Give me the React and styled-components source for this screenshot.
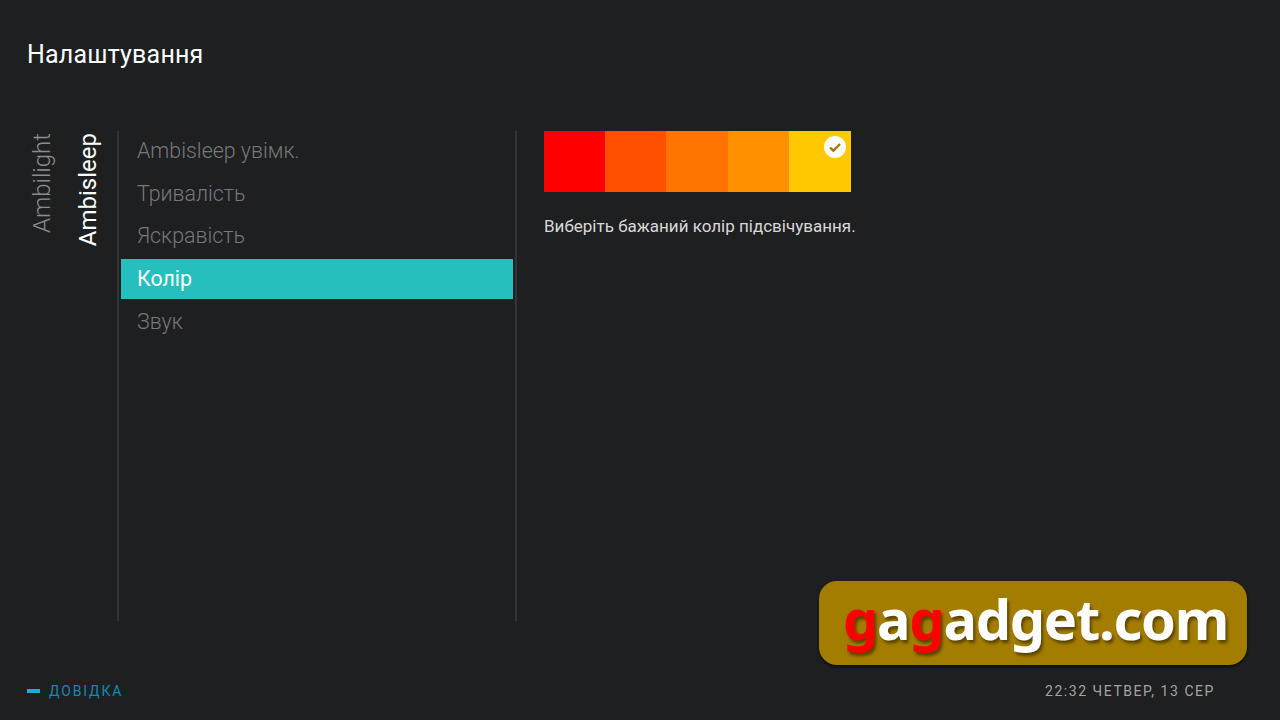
import styled, { createGlobalStyle } from 'styled-components';

const GlobalStyle = createGlobalStyle`
  html, body {
    margin: 0;
    padding: 0;
    background: #1e1f21;
  }
`;

const menuItems = ['Ambisleep увімк.', 'Тривалість', 'Яскравість', 'Колір', 'Звук'];
const swatches = ['#ff0000', '#ff5000', '#ff7300', '#ff9000', '#ffc800'];

export default function App() {
  const selected = 'Колір';

  return (
    <Page>
      <GlobalStyle />
      <Title>Налаштування</Title>
      <Main>
        <Tabs>
          <Tab>Ambilight</Tab>
          <Tab $active>Ambisleep</Tab>
        </Tabs>
        <Menu>
          {menuItems.map((item) => (
            <MenuItem key={item} $active={item === selected}>{item}</MenuItem>
          ))}
        </Menu>
        <Details>
          <Swatches>
            {swatches.map((color, i) => (
              <Swatch key={color} $color={color}>
                {i === swatches.length - 1 && (
                  <CheckBadge viewBox="0 0 22 22">
                    <circle cx="11" cy="11" r="11" fill="#fff" />
                    <path d="M6 11.5l3.4 3.2L16 8" fill="none" stroke="#a07a10" strokeWidth="2.4" />
                  </CheckBadge>
                )}
              </Swatch>
            ))}
          </Swatches>
          <Hint>Виберіть бажаний колір підсвічування.</Hint>
        </Details>
      </Main>
      <Footer>
        <Help><HelpKey />ДОВІДКА</Help>
        <Clock>22:32 ЧЕТВЕР, 13 СЕР</Clock>
      </Footer>
      <Watermark>
        <Red>g</Red>a<Red>g</Red>adget.com
      </Watermark>
    </Page>
  );
}

const Page = styled.div`
  position: relative;
  width: 1280px;
  height: 720px;
  overflow: hidden;
  display: flex;
  flex-direction: column;
  background: #1e1f21;
  font-family: Roboto, 'Liberation Sans', sans-serif;
`;

const Title = styled.h1`
  margin: 0;
  padding: 40px 0 0 27px;
  height: 131px;
  box-sizing: border-box;
  font-size: 25px;
  line-height: 29px;
  font-weight: 400;
  color: #fff;
  letter-spacing: 0.2px;
`;

const Main = styled.div`
  display: flex;
  height: 490px;
`;

const Tabs = styled.div`
  width: 117px;
  box-sizing: border-box;
  padding-left: 28px;
  display: flex;
  gap: 18px;
  align-items: flex-start;
`;

const Tab = styled.div`
  writing-mode: vertical-rl;
  transform: rotate(180deg);
  width: 28px;
  line-height: 28px;
  font-size: 24px;
  font-weight: ${(p) => (p.$active ? 400 : 300)};
  color: ${(p) => (p.$active ? '#fff' : '#8b8c8d')};
  text-align: right;
  padding-bottom: 2px;
`;

const Menu = styled.div`
  width: 400px;
  box-sizing: border-box;
  border-left: 2px solid #333436;
  border-right: 2px solid #333436;
  padding: 0 2px 0 2px;
`;

const MenuItem = styled.div`
  height: 40px;
  margin-bottom: 2.7px;
  padding-left: 16px;
  line-height: 40px;
  font-size: 21.4px;
  font-weight: ${(p) => (p.$active ? 400 : 300)};
  color: ${(p) => (p.$active ? '#fff' : '#77787a')};
  background: ${(p) => (p.$active ? '#25bfbd' : 'transparent')};
`;

const Details = styled.div`
  padding-left: 27px;
`;

const Swatches = styled.div`
  display: flex;
  width: 307px;
  height: 61px;
`;

const Swatch = styled.div`
  position: relative;
  flex: 0 0 61.2px;
  background: ${(p) => p.$color};

  &:last-child {
    flex: 1;
  }
`;

const CheckBadge = styled.svg`
  position: absolute;
  top: 5px;
  right: 5px;
  width: 22px;
  height: 22px;
`;

const Hint = styled.p`
  margin: 24px 0 0;
  font-size: 17px;
  line-height: 20px;
  color: #d8d8d8;
`;

const Footer = styled.div`
  flex: 1;
  display: flex;
  justify-content: space-between;
  align-items: center;
  padding: 41px 65px 0 27px;
  box-sizing: border-box;
  font-size: 14px;
`;

const Help = styled.div`
  display: flex;
  align-items: center;
  gap: 9px;
  color: #1487b4;
  letter-spacing: 1.85px;
`;

const HelpKey = styled.span`
  width: 13px;
  height: 4px;
  background: #25a9dc;
`;

const Clock = styled.div`
  color: #a3a4a5;
  letter-spacing: 1.55px;
`;

const Watermark = styled.div`
  position: absolute;
  left: 819px;
  top: 581px;
  width: 428px;
  height: 84px;
  box-sizing: border-box;
  padding-left: 24px;
  border-radius: 18px;
  background: #a37d00;
  box-shadow: 0 2px 3px rgba(0, 0, 0, 0.6);
  font-family: 'Noto Sans', sans-serif;
  font-size: 56px;
  font-weight: 700;
  line-height: 75px;
  letter-spacing: -1.3px;
  color: #fff;
  text-shadow: 2px 3px 3px rgba(0, 0, 0, 0.45);
  white-space: nowrap;
`;

const Red = styled.span`
  color: #ff0000;
`;
